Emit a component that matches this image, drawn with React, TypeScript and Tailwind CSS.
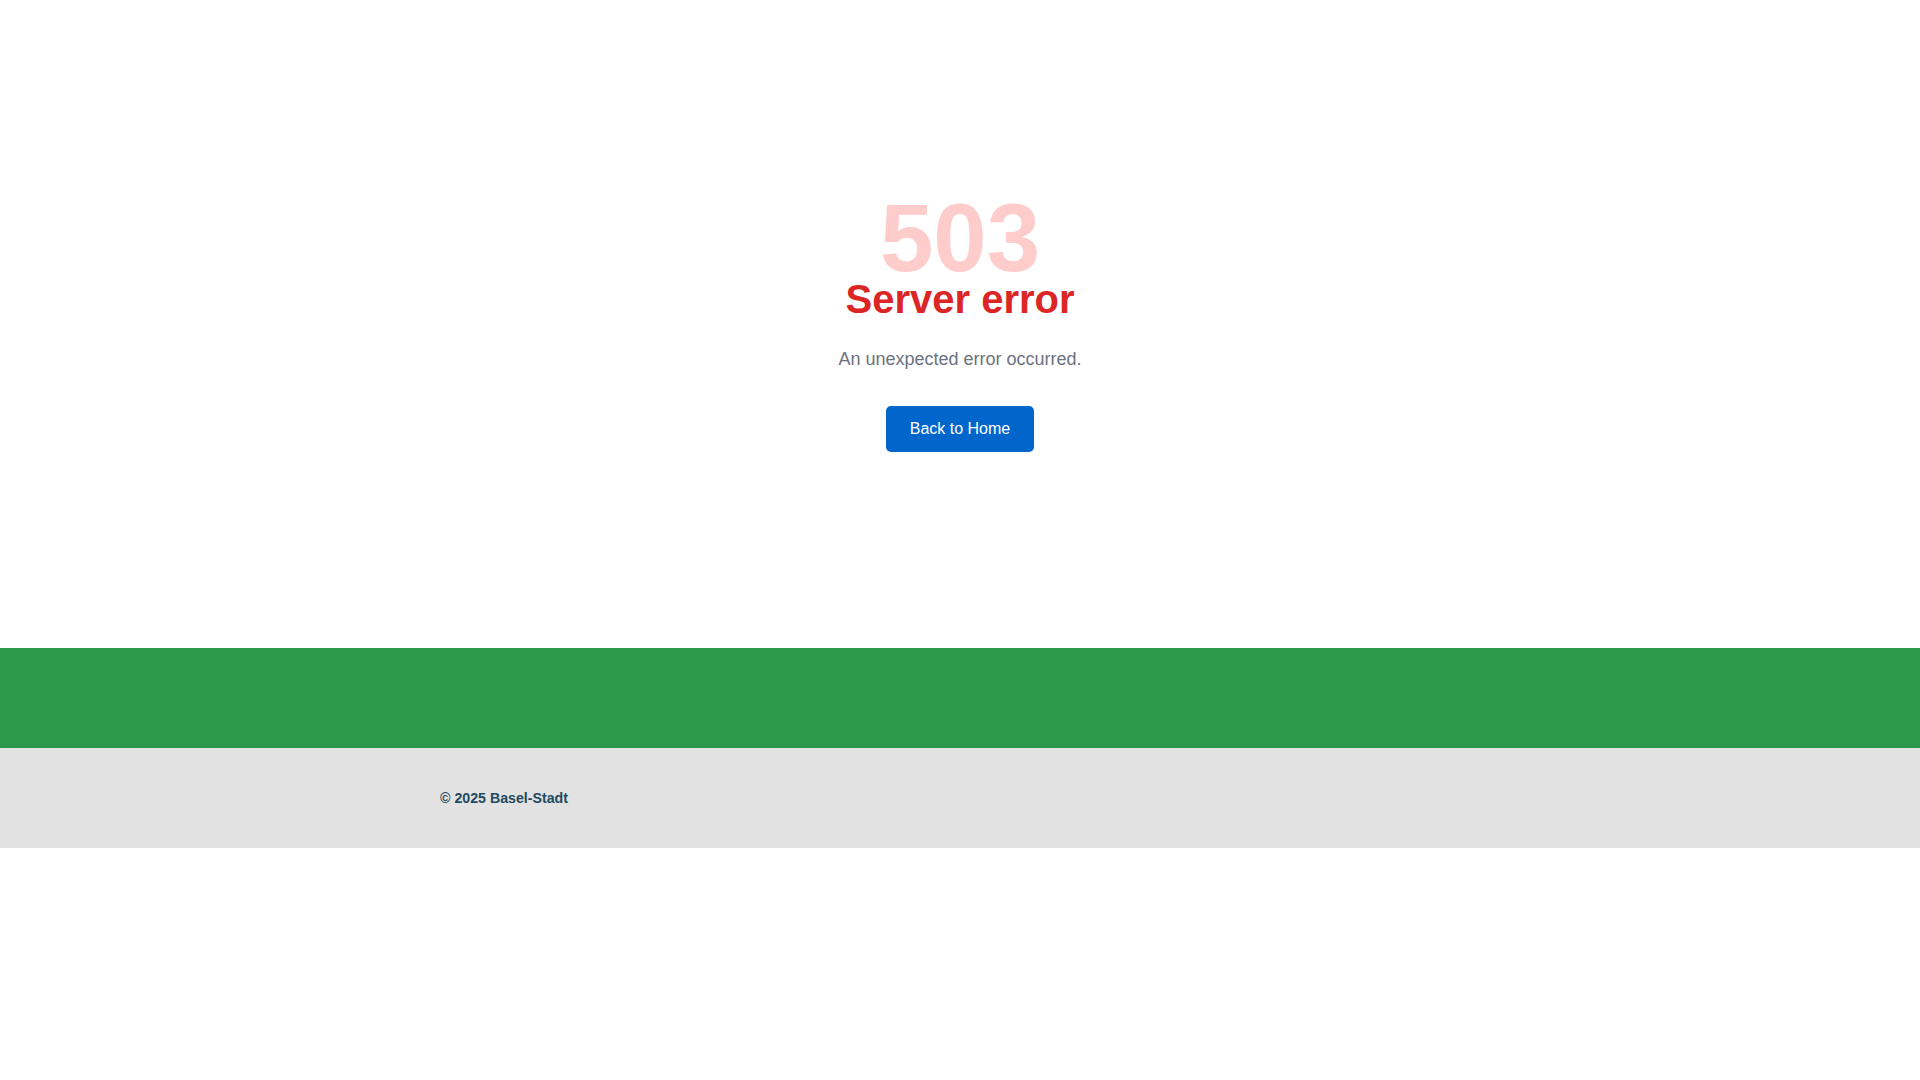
export default function App() {
  return (
    <div className="min-h-screen bg-white font-['Liberation_Sans',Arial,sans-serif]">
      <main className="flex h-[648px] flex-col items-center justify-center text-center">
        <h1 className="text-[96px] font-bold leading-[82px] text-[#ffcccc]">503</h1>
        <h2 className="text-[40px] font-bold leading-none text-[#dc2626]">Server error</h2>
        <p className="mt-[26px] text-lg leading-7 text-[#6b7280]">An unexpected error occurred.</p>
        <a
          href="#"
          className="mt-[33px] rounded-[5px] bg-[#0066cc] px-6 py-[11px] text-base leading-6 text-white"
        >
          Back to Home
        </a>
      </main>
      <footer>
        <div className="h-[100px] bg-[#2c9849]"></div>
        <div className="flex h-[100px] items-center bg-[#e2e2e2] pt-[2px]">
          <div className="mx-auto w-[1040px]">
            <p className="text-[14.2px] font-bold text-[#1f4a5f]">© 2025 Basel-Stadt</p>
          </div>
        </div>
      </footer>
    </div>
  )
}
